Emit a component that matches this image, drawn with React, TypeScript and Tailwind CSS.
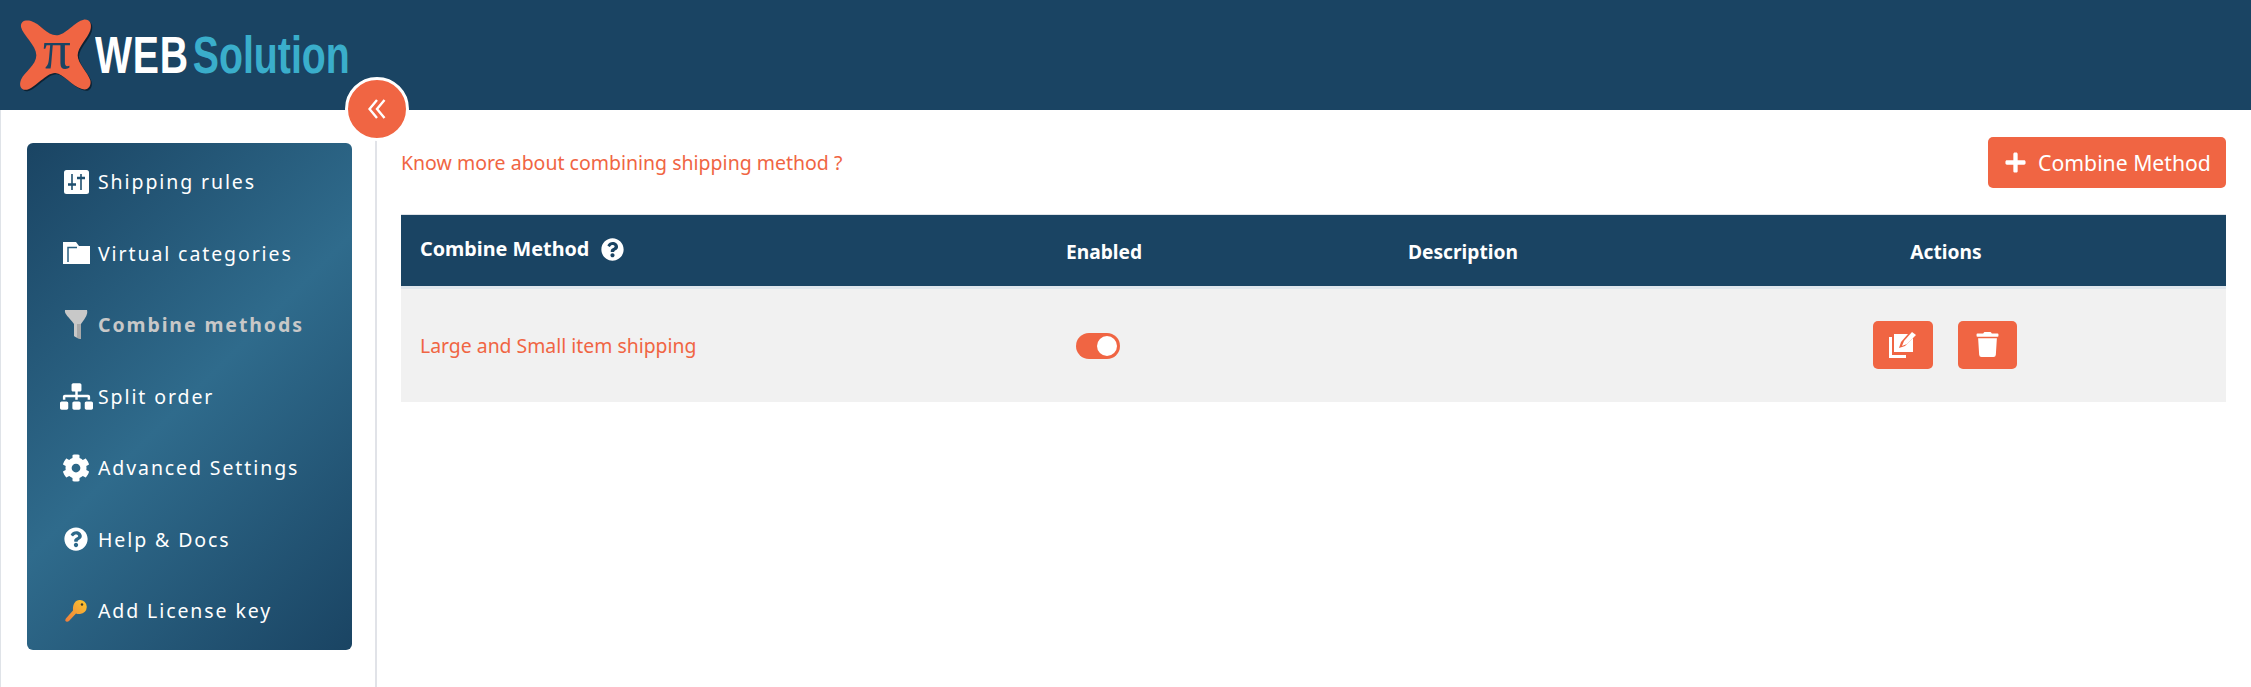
import React from 'react';
import { FaCog, FaPlus, FaQuestionCircle, FaSitemap, FaTrash } from 'react-icons/fa';

const navItems = [
  { label: 'Shipping rules', icon: 'sliders' },
  { label: 'Virtual categories', icon: 'folder' },
  { label: 'Combine methods', icon: 'funnel', active: true },
  { label: 'Split order', icon: 'sitemap' },
  { label: 'Advanced Settings', icon: 'cog' },
  { label: 'Help & Docs', icon: 'help' },
  { label: 'Add License key', icon: 'key' },
];

const starPath =
  'M62 80C60 62 75 58 92 62C120 70 140 105 168 105C195 105 225 62 250 58C268 56 276 70 270 90C262 115 232 140 232 165C232 190 262 215 270 240C274 258 262 272 245 266C215 258 190 220 165 218C140 216 105 262 80 268C62 272 55 255 62 238C72 215 108 195 108 165C108 135 68 105 62 80Z';

const LogoMark = () => (
  <svg width="77" height="77" viewBox="50 50 231 231" className="shrink-0">
    <path d={starPath} fill="#0d2233" transform="translate(4 4)" />
    <path d={starPath} fill="#f06543" />
    <text x="170" y="204" textAnchor="middle" fontSize="165" fontFamily="'Liberation Serif', serif" fill="#1a4463">
      π
    </text>
  </svg>
);

const NavIcon = ({ name }: { name: string }) => {
  if (name === 'sliders') {
    return (
      <svg width="25" height="24" viewBox="0 0 25 24">
        <rect width="25" height="24" rx="2.5" fill="#fff" />
        <path d="M8 4v16M17 4v16" stroke="#1f4f6f" strokeWidth="1.6" />
        <path d="M4 14.5h8M13 8h8" stroke="#1f4f6f" strokeWidth="2.4" />
      </svg>
    );
  }
  if (name === 'folder') {
    return (
      <svg width="27" height="22" viewBox="0 0 27 22">
        <path d="M0 0h13l3 4h11v18H0Z" fill="#fff" />
        <path d="M5 20V5.500h9" fill="none" stroke="#2a5f80" strokeWidth="1.5" />
      </svg>
    );
  }
  if (name === 'funnel') {
    return (
      <svg width="24" height="29" viewBox="0 0 24 29">
        <path d="M1 0h22c1 4-1 7-6 14v15c-4-1-6-2-7-3V14C5 7 0 4 1 0Z" fill="#c8c8c8" />
        <path d="M17 14v15c-2 0-3-1-4-1V14Z" fill="#a9a9a9" />
      </svg>
    );
  }
  if (name === 'sitemap') return <FaSitemap className="text-white" size={33} />;
  if (name === 'cog') return <FaCog className="text-white" size={28} />;
  if (name === 'help') return <FaQuestionCircle className="text-white" size={24} />;
  return (
    <svg width="22" height="22" viewBox="0 0 22 22">
      <defs>
        <linearGradient id="keyFill" x1="0" y1="1" x2="1" y2="0">
          <stop offset="0" stopColor="#ef7d3c" />
          <stop offset="1" stopColor="#fcc72e" />
        </linearGradient>
      </defs>
      <path
        d="M14.5 0A7 7 0 0 1 15 14c-1.500.2-3 0-4-.6L4 21c-1 1-3 1-3.500 0-.5-1 0-2 .8-3L8 10.500C7.500 5 10 0 14.500 0Z"
        fill="url(#keyFill)"
      />
      <circle cx="17" cy="4.500" r="1.200" fill="#3a3a2a" />
    </svg>
  );
};

const Sidebar = () => (
  <nav className="w-[325px] h-[507px] rounded-[6px] bg-[linear-gradient(135deg,#1a4463_0%,#2f6b8c_50%,#1a4463_100%)] pl-[31px] pt-[3px] flex flex-col">
    {navItems.map((item) => (
      <div key={item.label} className="h-[71.5px] flex items-center">
        <div className="w-[40px] pr-[4px] flex justify-center shrink-0">
          <NavIcon name={item.icon} />
        </div>
        <span
          className={
            item.active
              ? 'text-[19.5px] font-bold tracking-[1.9px] text-[#c8c8c8]'
              : 'text-[19.5px] tracking-[1.9px] text-white'
          }
        >
          {item.label}
        </span>
      </div>
    ))}
  </nav>
);

export default function App() {
  return (
    <div className="w-[2251px] h-[687px] overflow-hidden bg-white font-['Noto_Sans',sans-serif]">
      <header className="h-[110px] bg-[#1a4463] pl-[17px] pt-[17px] flex items-start">
        <LogoMark />
        <div className="ml-[1px] mt-[9px] origin-left scale-x-[0.77] flex items-baseline font-['Liberation_Sans',sans-serif] font-bold text-[51px] leading-[60px]">
          <span className="text-white tracking-[1px]">WEB</span>
          <span className="text-[#3aaecb] ml-[5px]">Solution</span>
        </div>
      </header>

      <div className="flex h-[577px] border-l border-[#dfe3e8]">
        <aside className="relative w-[376px] shrink-0 border-r-2 border-[#e1e3e8] pl-[26px] pt-[33px]">
          <Sidebar />
          <button className="absolute right-[-34px] top-[-33px] w-[64px] h-[64px] rounded-full bg-[#f06543] border-[3px] border-white flex items-center justify-center">
            <svg width="18" height="20" viewBox="0 0 18 20" fill="none" stroke="#fff" strokeWidth="2.4">
              <path d="M9 1 1.500 10 9 19M16.500 1 9 10l7.500 9" />
            </svg>
          </button>
        </aside>

        <main className="flex-1 pl-[24px] pr-[25px]">
          <div className="flex items-center justify-between h-[104px] pt-[1px]">
            <a className="text-[#f06543] text-[19.5px]">Know more about combining shipping method ?</a>
            <button className="w-[238px] h-[51px] rounded-[5px] bg-[#f06543] text-white text-[21.2px] flex items-center justify-center gap-[11px] pl-[1px]">
              <FaPlus size={23} />
              Combine Method
            </button>
          </div>

          <div className="border-t border-[#dfe3e8]">
            <div className="grid grid-cols-[547px_312px_406px_560px] h-[71px] items-center bg-[#1a4463] text-white text-[19.2px] font-bold border-b-[3px] border-[#dfe6ec] box-content">
              <div className="pl-[19px] flex items-center gap-[12px] text-[19.8px] mb-[3px]">
                Combine Method
                <FaQuestionCircle size={23} />
              </div>
              <div className="text-center mt-[3px]">Enabled</div>
              <div className="text-center mt-[3px]">Description</div>
              <div className="text-center mt-[3px]">Actions</div>
            </div>
            <div className="grid grid-cols-[547px_312px_406px_560px] h-[113px] items-center bg-[#f1f1f1]">
              <div className="pl-[19px] text-[#f06543] text-[19.4px]">Large and Small item shipping</div>
              <div className="flex justify-center pr-[12px]">
                <div className="w-[44px] h-[26px] rounded-full bg-[#f06543] flex items-center justify-end pr-[3px]">
                  <div className="w-[20px] h-[20px] rounded-full bg-white" />
                </div>
              </div>
              <div />
              <div className="flex justify-center gap-[25px] pr-[2px] mb-[2px]">
                <button className="w-[60px] h-[48px] rounded-[5px] bg-[#f06543] flex items-center justify-center">
                  <svg width="28" height="26" viewBox="0 0 28 26" fill="#fff">
                    <path d="M0 5h3v18h14v3H0Z" />
                    <path d="M5 2h14l-7 8-2 6 6-2 8-8v14H5Z" />
                    <path d="M23 0l4 3-9 9-5 2 2-5Z" />
                  </svg>
                </button>
                <button className="w-[59px] h-[48px] rounded-[5px] bg-[#f06543] flex items-center justify-center">
                  <FaTrash className="text-white" size={25} />
                </button>
              </div>
            </div>
          </div>
        </main>
      </div>
    </div>
  );
}
